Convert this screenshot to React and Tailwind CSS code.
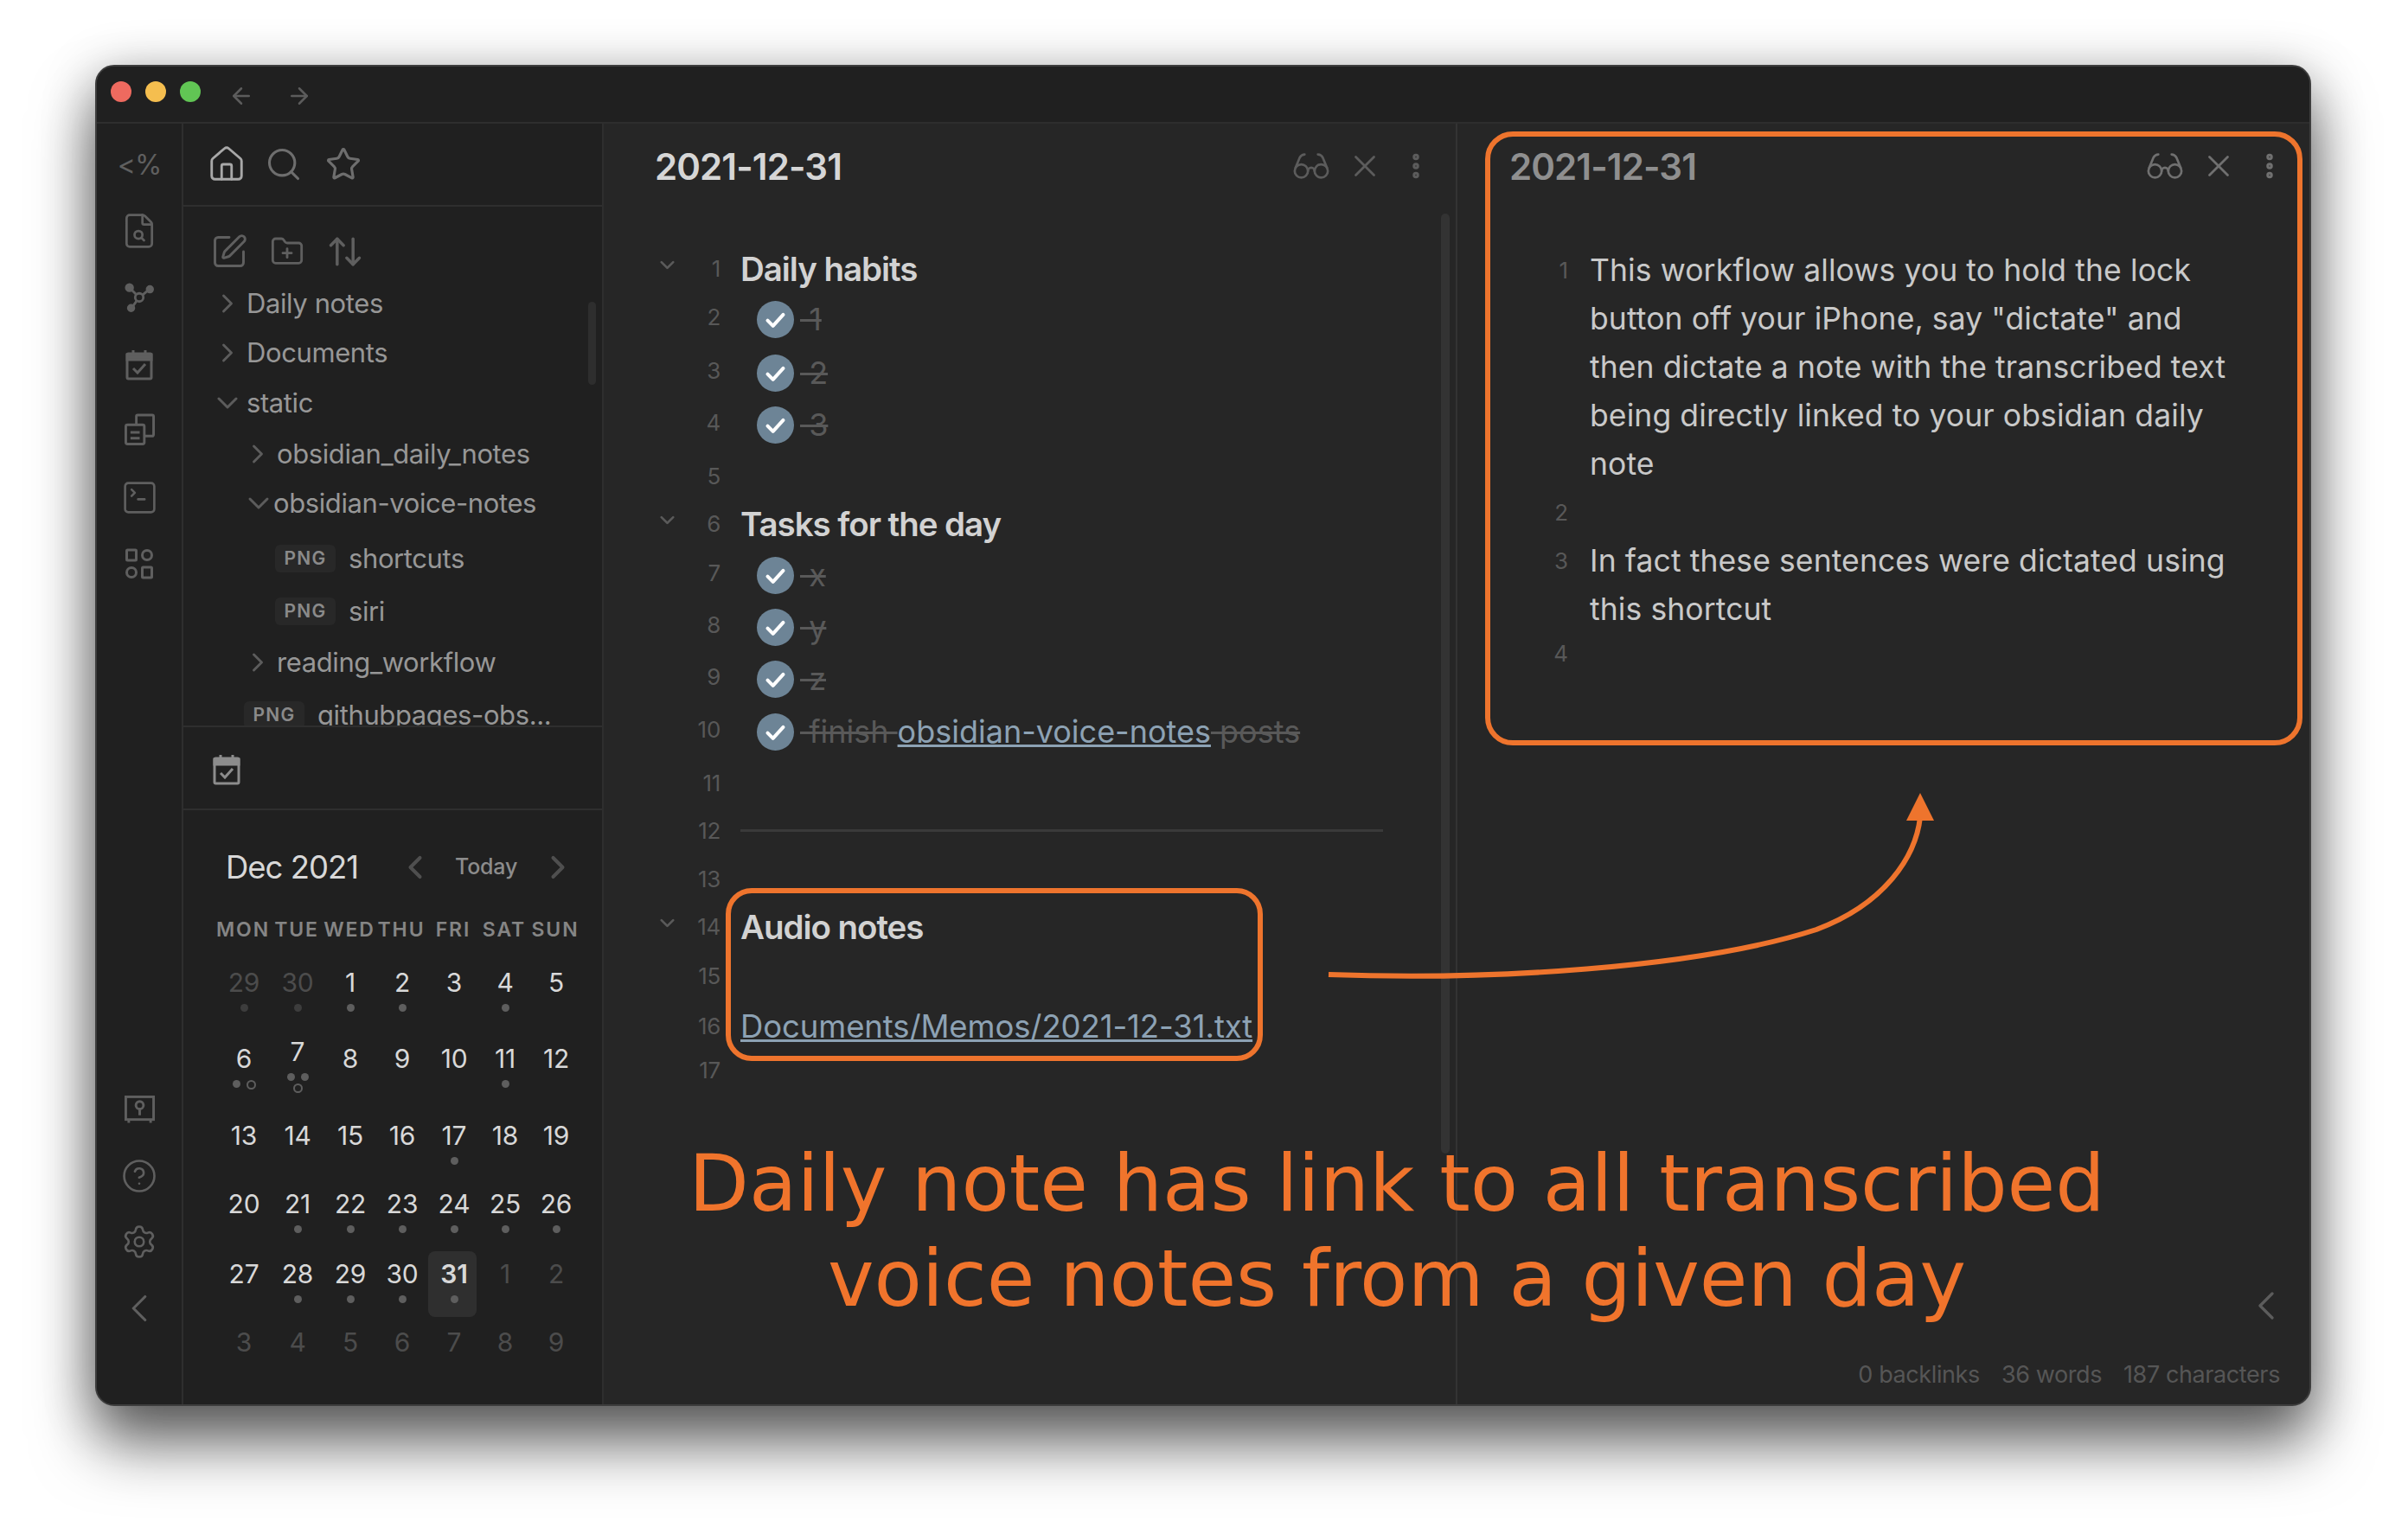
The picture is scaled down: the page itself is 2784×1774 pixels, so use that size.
import {
  ArrowLeft, ArrowRight, ArrowUpDown, ChevronDown, ChevronLeft, ChevronRight, CircleHelp, EllipsisVertical,
  FileSearch, FolderPlus, Glasses, House, Search, Settings, SquarePen, SquareTerminal, Star, X,
} from 'lucide-react';

// small hand drawn icons lucide does not have in this shape
const GraphIcon = ({ className }) => (
  <svg viewBox="0 0 36 36" className={className} fill="none" stroke="currentColor" strokeWidth="3">
    <circle cx="18" cy="18" r="5" />
    <circle cx="6" cy="6" r="4" fill="currentColor" />
    <circle cx="31" cy="8" r="3.5" fill="currentColor" />
    <circle cx="8" cy="31" r="3.5" fill="currentColor" />
    <path d="M9 9l5 5M28 10l-6 5M10 29l5-7" />
  </svg>
);

const CalendarIcon = ({ className }) => (
  <svg viewBox="0 0 32 36" className={className} fill="none" stroke="currentColor" strokeWidth="3">
    <rect x="2" y="5" width="28" height="29" rx="1.5" />
    <path d="M2 6h28v6H2z" fill="currentColor" />
    <path d="M9 1v5M23 1v5" />
    <path d="M9 22l5 5 9-10" />
  </svg>
);

const CopiesIcon = ({ className }) => (
  <svg viewBox="0 0 36 38" className={className} fill="none" stroke="currentColor" strokeWidth="3" strokeLinejoin="round">
    <path d="M14 12V3a1.500 1.500 0 0 1 1.500-1.500H33A1.500 1.500 0 0 1 34.500 3v22a1.500 1.500 0 0 1-1.500 1.500h-9" />
    <rect x="1.500" y="13" width="22" height="23" rx="2" />
    <path d="M7 22h11M7 29h11" />
  </svg>
);

const AppsIcon = ({ className }) => (
  <svg viewBox="0 0 32 36" className={className} fill="none" stroke="currentColor" strokeWidth="3">
    <rect x="1.500" y="2" width="11" height="12" rx="1" />
    <circle cx="25" cy="8" r="5.500" />
    <circle cx="7" cy="28" r="5.500" />
    <rect x="19.500" y="22" width="11" height="12" rx="1" />
  </svg>
);

const VaultIcon = ({ className }) => (
  <svg viewBox="0 0 36 34" className={className} fill="none" stroke="currentColor" strokeWidth="3">
    <rect x="1.500" y="2" width="33" height="27" />
    <circle cx="18" cy="12" r="4.500" />
    <path d="M18 17v7M5 29v4M31 29v4" />
  </svg>
);

const Ribbon = () => (
  <div className="w-[100px] shrink-0 border-r-2 border-[#2e2e2e] flex flex-col items-center text-[#5f5f5f]">
    <div className="mt-[26px] h-[44px] leading-[44px] text-[32px] tracking-[-1px]">&lt;%</div>
    <FileSearch className="w-[44px] h-[44px] mt-[32px]" strokeWidth={1.5} />
    <GraphIcon className="w-[34px] h-[38px] mt-[36px]" />
    <CalendarIcon className="w-[32px] h-[38px] mt-[40px]" />
    <CopiesIcon className="w-[35px] h-[38px] mt-[37px]" />
    <SquareTerminal className="w-[45px] h-[45px] mt-[37px]" strokeWidth={1.4} />
    <AppsIcon className="w-[32px] h-[36px] mt-[36px]" />
    <div className="flex-1" />
    <VaultIcon className="w-[35px] h-[34px]" />
    <CircleHelp className="w-[42px] h-[42px] mt-[39px]" strokeWidth={1.5} />
    <Settings className="w-[42px] h-[42px] mt-[34px]" strokeWidth={1.5} />
    <ChevronLeft className="w-[54px] h-[54px] mt-[29px] mb-[84px]" strokeWidth={1.4} />
  </div>
);

const treeRows = [
  { label: 'Daily notes', icon: 'right', pad: 'pl-[33px]', gap: 'gap-[4px]', mt: 'mt-0' },
  { label: 'Documents', icon: 'right', pad: 'pl-[33px]', gap: 'gap-[4px]', mt: 'mt-[7px]' },
  { label: 'static', icon: 'down', pad: 'pl-[31px]', gap: 'gap-[2px]', mt: 'mt-[8px]' },
  { label: 'obsidian_daily_notes', icon: 'right', pad: 'pl-[68px]', gap: 'gap-[4px]', mt: 'mt-[9px]' },
  { label: 'obsidian-voice-notes', icon: 'down', pad: 'pl-[67px]', gap: '-space-x-[3px]', mt: 'mt-[7px]' },
  { label: 'shortcuts', badge: true, pad: 'pl-[106px]', mt: 'mt-[14px]' },
  { label: 'siri', badge: true, pad: 'pl-[106px]', mt: 'mt-[11px]' },
  { label: 'reading_workflow', icon: 'right', pad: 'pl-[68px]', gap: 'gap-[4px]', mt: 'mt-[9px]' },
  { label: 'githubpages-obs...', badge: true, pad: 'pl-[70px]', mt: 'mt-[11px]' },
];

const TreeRow = ({ row }) => (
  <div className={`h-[50px] shrink-0 flex items-center text-[31px] tracking-[-0.4px] text-[#979797] whitespace-nowrap ${row.pad} ${row.gap || ''} ${row.mt}`}>
    {row.icon === 'right' && <ChevronRight className="w-[36px] h-[36px] text-[#5c5c5c]" strokeWidth={1.9} />}
    {row.icon === 'down' && <ChevronDown className="w-[40px] h-[40px] text-[#5c5c5c]" strokeWidth={1.8} />}
    {row.badge && (
      <span className="w-[70px] h-[32px] mr-[15px] rounded-[6px] bg-[#282828] flex items-center justify-center text-[21px] font-semibold tracking-[1.2px] text-[#8a8a8a]">
        PNG
      </span>
    )}
    <span>{row.label}</span>
  </div>
);

const weekdays = ['MON', 'TUE', 'WED', 'THU', 'FRI', 'SAT', 'SUN'];

// n: number, dim: other month, dots: filled dots, ring: hollow dot
const calendar = [
  { h: 'h-[88px]', days: [
    { n: 29, dim: true, dots: 1 }, { n: 30, dim: true, dots: 1 }, { n: 1, dots: 1 }, { n: 2, dots: 1 }, { n: 3 }, { n: 4, dots: 1 }, { n: 5 },
  ] },
  { h: 'h-[89px]', days: [
    { n: 6, dots: 1, ring: true }, { n: 7, dots: 2, ring: true, stack: true }, { n: 8 }, { n: 9 }, { n: 10 }, { n: 11, dots: 1 }, { n: 12 },
  ] },
  { h: 'h-[79px]', days: [
    { n: 13 }, { n: 14 }, { n: 15 }, { n: 16 }, { n: 17, dots: 1 }, { n: 18 }, { n: 19 },
  ] },
  { h: 'h-[81px]', days: [
    { n: 20 }, { n: 21, dots: 1 }, { n: 22, dots: 1 }, { n: 23, dots: 1 }, { n: 24, dots: 1 }, { n: 25, dots: 1 }, { n: 26, dots: 1 },
  ] },
  { h: 'h-[79px]', days: [
    { n: 27 }, { n: 28, dots: 1 }, { n: 29, dots: 1 }, { n: 30, dots: 1 }, { n: 31, dots: 1, today: true }, { n: 1, dim: true }, { n: 2, dim: true },
  ] },
  { h: 'h-[60px]', days: [
    { n: 3, dim: true }, { n: 4, dim: true }, { n: 5, dim: true }, { n: 6, dim: true }, { n: 7, dim: true }, { n: 8, dim: true }, { n: 9, dim: true },
  ] },
];

const Dot = ({ dim }) => <span className={`w-[9px] h-[9px] rounded-full ${dim ? 'bg-[#3d3d3d]' : 'bg-[#5e5e5e]'}`} />;
const Ring = () => <span className="w-[11px] h-[11px] rounded-full border-2 border-[#5e5e5e]" />;

const DayCell = ({ day }) => (
  <div className={`relative flex flex-col items-center ${day.stack ? '-mt-[8px]' : ''}`}>
    {day.today && <div className="absolute -top-[8px] left-0 w-[56px] h-[76px] rounded-[8px] bg-[#2f2f2f]" />}
    <div className={`relative h-[36px] leading-[36px] text-[30px] tracking-[-0.2px] ${day.dim ? 'text-[#4c4c4c]' : 'text-[#d8d8d8]'} ${day.today ? 'font-semibold' : ''}`}>
      {day.n}
    </div>
    <div className={`relative flex justify-center gap-[7px] mt-[7px] ${day.stack ? 'flex-wrap w-[26px] gap-y-[3px]' : ''}`}>
      {Array.from({ length: day.dots || 0 }).map((_, i) => <Dot key={i} dim={day.dim} />)}
      {day.ring && <Ring />}
    </div>
  </div>
);

const Sidebar = () => (
  <div className="w-[486px] shrink-0 border-r-2 border-[#2e2e2e] flex flex-col">
    <div className="h-[96px] shrink-0 border-b-2 border-[#2e2e2e] flex items-center pl-[27px]">
      <House className="w-[46px] h-[46px] text-[#a8a8a8]" strokeWidth={1.5} />
      <Search className="w-[44px] h-[44px] ml-[21px] text-[#6e6e6e]" strokeWidth={1.7} />
      <Star className="w-[42px] h-[42px] ml-[26px] text-[#6e6e6e]" strokeWidth={1.8} />
    </div>
    <div className="relative h-[602px] shrink-0 border-b-2 border-[#2e2e2e] overflow-hidden">
      <div className="h-[87px] flex items-center pt-[16px] pl-[31px] text-[#5f5f5f]">
        <SquarePen className="w-[44px] h-[44px]" strokeWidth={1.6} />
        <FolderPlus className="w-[40px] h-[40px] ml-[25px]" strokeWidth={1.7} />
        <ArrowUpDown className="w-[44px] h-[44px] ml-[25px]" strokeWidth={1.9} />
      </div>
      <div className="flex flex-col">
        {treeRows.map((row) => <TreeRow key={row.label} row={row} />)}
      </div>
      <div className="absolute left-[468px] top-[110px] w-[9px] h-[96px] rounded-full bg-[#2e2e2e]" />
    </div>
    <div className="h-[96px] shrink-0 border-b-2 border-[#2e2e2e] flex items-center pl-[34px] pt-[4px]">
      <CalendarIcon className="w-[32px] h-[38px] text-[#8c8c8c]" />
    </div>
    <div className="flex items-center h-[50px] mt-[41px] pl-[49px]">
      <span className="w-[197px] text-[36.500px] tracking-[-1px] text-[#d8d8d8] whitespace-nowrap">Dec 2021</span>
      <ChevronLeft className="w-[44px] h-[44px] text-[#4f4f4f]" strokeWidth={2.2} />
      <span className="ml-[24px] w-[73px] text-[25px] font-medium tracking-[-0.2px] text-[#8c8c8c]">Today</span>
      <ChevronRight className="w-[44px] h-[44px] ml-[24px] text-[#4f4f4f]" strokeWidth={2.2} />
    </div>
    <div className="grid grid-cols-[62px_62px_60px_60px_60px_58px_60px] ml-[38px] mt-[33px] text-center text-[23px] font-semibold tracking-[1.9px] text-[#858585]">
      {weekdays.map((d) => <div key={d} className="h-[28px] leading-[28px] whitespace-nowrap">{d}</div>)}
    </div>
    <div className="ml-[39px] mt-[29px] flex flex-col">
      {calendar.map((week, i) => (
        <div key={i} className={`grid grid-cols-[62px_62px_60px_60px_60px_58px_60px] ${week.h}`}>
          {week.days.map((day, j) => <DayCell key={j} day={day} />)}
        </div>
      ))}
    </div>
  </div>
);

const PaneHeader = ({ titleClass, padClass, iconClass }) => (
  <div className={`h-[98px] shrink-0 flex items-center ${padClass}`}>
    <div className={`text-[42px] font-semibold tracking-[-0.9px] ${titleClass}`}>2021-12-31</div>
    <div className="flex-1" />
    <Glasses className={`w-[46px] h-[46px] ${iconClass}`} strokeWidth={1.4} />
    <X className={`w-[42px] h-[42px] ml-[18px] ${iconClass}`} strokeWidth={1.6} />
    <EllipsisVertical className={`w-[36px] h-[36px] ml-[20px] ${iconClass}`} strokeWidth={3} />
  </div>
);

const Check = () => (
  <span className="w-[43px] h-[43px] mt-[6px] shrink-0 rounded-full bg-[#6d8496] flex items-center justify-center">
    <svg viewBox="0 0 24 24" className="w-[27px] h-[27px]" fill="none" stroke="white" strokeWidth="3.6" strokeLinecap="round" strokeLinejoin="round">
      <path d="M4 13l5.500 5.500L20 7" />
    </svg>
  </span>
);

const editorRows = [
  { n: 1, mt: 'mt-0', heading: 'Daily habits' },
  { n: 2, mt: 'mt-[6px]', task: ' 1' },
  { n: 3, mt: 'mt-[12px]', task: ' 2' },
  { n: 4, mt: 'mt-[10px]', task: ' 3' },
  { n: 5, mt: 'mt-[12px]' },
  { n: 6, mt: 'mt-[5px]', heading: 'Tasks for the day' },
  { n: 7, mt: 'mt-[7px]', task: ' x' },
  { n: 8, mt: 'mt-[10px]', task: ' y' },
  { n: 9, mt: 'mt-[10px]', task: ' z' },
  { n: 10, mt: 'mt-[11px]', long: true },
  { n: 11, mt: 'mt-[12px]' },
  { n: 12, mt: 'mt-[5px]', rule: true },
  { n: 13, mt: 'mt-[6px]' },
  { n: 14, mt: 'mt-[5px]', heading: 'Audio notes' },
  { n: 15, mt: 'mt-[7px]' },
  { n: 16, mt: 'mt-[8px]', link: 'Documents/Memos/2021-12-31.txt' },
  { n: 17, mt: 'mt-[1px]' },
];

const EditorRow = ({ row }) => (
  <div className={`h-[50px] flex items-center ${row.mt}`}>
    <div className="w-[27px] -mt-[8px] text-[#5a5a5a]">
      {row.heading && <ChevronDown className="w-[27px] h-[27px]" strokeWidth={2.4} />}
    </div>
    <div className="w-[48px] text-right text-[26px] tracking-[-0.3px] text-[#585858]">{row.n}</div>
    <div className="flex-1 ml-[23px] flex items-center whitespace-pre">
      {row.heading && <span className="mt-[4px] text-[38.500px] font-semibold tracking-[-1.05px] text-[#d2d2d2]">{row.heading}</span>}
      {row.task && (
        <>
          <span className="ml-[19px]"><Check /></span>
          <span className="ml-[7px] mt-[5px] text-[36px] line-through text-[#595959]">{row.task}</span>
        </>
      )}
      {row.long && (
        <>
          <span className="ml-[19px]"><Check /></span>
          <span className="ml-[7px] mt-[5px] text-[36px]">
            <span className="line-through text-[#595959]">{' finish '}</span>
            <span className="underline text-[#8da2b4]">obsidian-voice-notes</span>
            <span className="line-through text-[#595959]">{' posts'}</span>
          </span>
        </>
      )}
      {row.rule && <div className="w-[743px] h-[3px] bg-[#3a3a3a]" />}
      {row.link && <span className="mt-[2px] text-[36.500px] tracking-[-0.1px] underline text-[#8da2b4]">{row.link}</span>}
    </div>
  </div>
);

const noteBlocks = [
  { n: 1, leading: 'leading-[56px]', lines: ['This workflow allows you to hold the lock', 'button off your iPhone, say "dictate" and', 'then dictate a note with the transcribed text', 'being directly linked to your obsidian daily', 'note'] },
  { n: 2, leading: 'leading-[56px]', lines: [''] },
  { n: 3, leading: 'leading-[56px]', lines: ['In fact these sentences were dictated using', 'this shortcut'] },
  { n: 4, leading: 'leading-[46px]', lines: [''] },
];

export default function App() {
  return (
    <div className="relative w-[2784px] h-[1774px] bg-white overflow-hidden pt-[75px] pl-[110px] font-['Inter','Liberation_Sans',sans-serif] antialiased">
      {/* window */}
      <div className="w-[2562px] h-[1551px] flex flex-col rounded-[22px] overflow-hidden bg-[#262626] border-2 border-[#3d3d3d] shadow-[0_45px_70px_rgba(0,0,0,0.55),0_10px_60px_rgba(0,0,0,0.3)]">
        <div className="h-[66px] shrink-0 bg-[#202020] border-b-2 border-[#2e2e2e] flex items-center pl-[16px] pb-[6px]">
          <span className="w-[24px] h-[24px] rounded-full bg-[#ee6a5f]" />
          <span className="w-[24px] h-[24px] ml-[16px] rounded-full bg-[#f5be4f]" />
          <span className="w-[24px] h-[24px] ml-[16px] rounded-full bg-[#61c554]" />
          <ArrowLeft className="w-[30px] h-[30px] ml-[32px] mt-[10px] text-[#5c5c5c]" strokeWidth={2} />
          <ArrowRight className="w-[30px] h-[30px] ml-[37px] mt-[10px] text-[#5c5c5c]" strokeWidth={2} />
        </div>
        <div className="flex-1 flex min-h-0">
          <div className="flex bg-[#202020]">
            <Ribbon />
            <Sidebar />
          </div>

          {/* left editor */}
          <div className="relative w-[987px] shrink-0 border-r-2 border-[#333333] flex flex-col">
            <PaneHeader titleClass="text-[#d6d6d6]" padClass="pl-[59px] pr-[28px]" iconClass="text-[#5c5c5c]" />
            <div className="pt-[44px] pl-[60px] flex flex-col">
              {editorRows.map((row) => <EditorRow key={row.n} row={row} />)}
            </div>
            <div className="absolute left-[968px] top-[104px] w-[10px] h-[1087px] rounded-full bg-[#333333]" />
          </div>

          {/* right editor */}
          <div className="flex-1 flex flex-col min-w-0">
            <PaneHeader titleClass="text-[#8f8f8f]" padClass="pl-[60px] pr-[28px]" iconClass="text-[#707070]" />
            <div className="pt-[44px] flex flex-col">
              {noteBlocks.map((b) => (
                <div key={b.n} className="flex">
                  <div className={`w-[128px] shrink-0 text-right text-[26px] text-[#585858] ${b.leading}`}>{b.n}</div>
                  <div className={`ml-[25px] text-[35.500px] tracking-[0.1px] text-[#c9c9c9] whitespace-nowrap ${b.leading}`}>
                    {b.lines.map((line, i) => <div key={i}>{line}</div>)}
                  </div>
                </div>
              ))}
            </div>
            <div className="flex-1" />
            <div className="flex justify-end pr-[22px]">
              <ChevronLeft className="w-[56px] h-[56px] text-[#5c5c5c]" strokeWidth={1.4} />
            </div>
            <div className="h-[56px] mt-[30px] flex justify-end gap-[25px] pr-[34px] text-[27px] tracking-[-0.4px] text-[#565656] pt-[2px]">
              <span>0 backlinks</span>
              <span>36 words</span>
              <span>187 characters</span>
            </div>
          </div>
        </div>
      </div>

      {/* annotations drawn on top of the screenshot */}
      <div className="absolute left-[839px] top-[1027px] w-[621px] h-[200px] rounded-[30px] border-[6px] border-[#ee742d]" />
      <div className="absolute left-[1717px] top-[152px] w-[945px] h-[710px] rounded-[32px] border-[6px] border-[#ee742d]" />
      <svg className="absolute left-0 top-0 pointer-events-none" width="2784" height="1774" fill="none">
        <path d="M1536 1127C1720 1134 1960 1120 2100 1075C2180 1045 2215 990 2220 945" stroke="#ee742d" strokeWidth="6" />
        <path d="M2220 917L2236 949H2204Z" fill="#ee742d" />
      </svg>
      <div className="absolute left-[700px] top-[1314px] w-[1830px] text-center text-[90.500px] leading-[110px] text-[#f0742c] font-['DejaVu_Sans',sans-serif]">
        Daily note has link to all transcribed
        <br />
        voice notes from a given day
      </div>
    </div>
  );
}
